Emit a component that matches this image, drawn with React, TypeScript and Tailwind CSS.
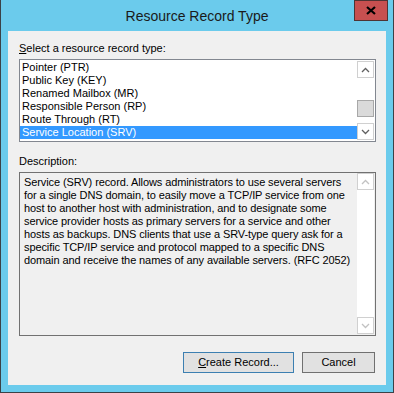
const items = [
  "Pointer (PTR)",
  "Public Key (KEY)",
  "Renamed Mailbox (MR)",
  "Responsible Person (RP)",
  "Route Through (RT)",
  "Service Location (SRV)",
];

const description = [
  "Service (SRV) record. Allows administrators to use several servers",
  "for a single DNS domain, to easily move a TCP/IP service from one",
  "host to another host with administration, and to designate some",
  "service provider hosts as primary servers for a service and other",
  "hosts as backups. DNS clients that use a SRV-type query ask for a",
  "specific TCP/IP service and protocol mapped to a specific DNS",
  "domain and receive the names of any available servers. (RFC 2052)",
];

const Chevron = ({ up, muted = false }: { up?: boolean; muted?: boolean }) => (
  <svg width="9" height="6" viewBox="0 0 9 6">
    <polyline
      points={up ? "1,5 4.5,1.5 8,5" : "1,1 4.5,4.5 8,1"}
      fill="none"
      stroke={muted ? "#c2c2c2" : "#606060"}
      strokeWidth="1.3"
    />
  </svg>
);

const ScrollButton = ({ up, muted }: { up?: boolean; muted?: boolean }) => (
  <div className="h-[17px] border border-[#d0d0d0] bg-white flex items-center justify-center">
    <Chevron up={up} muted={muted} />
  </div>
);

export default function App() {
  return (
    <div className="w-[394px] h-[393px] bg-[#6bcbec] border-x border-b border-[#3b4247] flex flex-col font-['Liberation_Sans',Arial,sans-serif] text-[11px] text-black">
      {/* title bar */}
      <div className="h-[31px] shrink-0 flex items-center justify-center relative">
        <span className="text-[14px] leading-[20px] text-[#1a1a1a]">Resource Record Type</span>
        <button className="absolute top-0 right-[5px] w-[34px] h-[21px] bg-[#c75050] border border-[#4f3434] flex items-center justify-center">
          <svg width="10" height="9" viewBox="0 0 10 9">
            <path d="M1 1 L9 8 M9 1 L1 8" stroke="#000" strokeWidth="2.2" />
          </svg>
        </button>
      </div>

      {/* client area */}
      <div className="mx-[7px] mb-[7px] flex-1 bg-[#f0f0f0] pl-[11px] pr-[10px] flex flex-col">
        <div className="mt-[11px] leading-[13px]">
          <span className="underline">S</span>elect a resource record type:
        </div>

        <div className="mt-[4px] h-[83px] border border-[#828790] bg-white flex">
          <div className="flex-1 pt-px">
            {items.map((item, i) => (
              <div
                key={item}
                className={`h-[13px] leading-[13px] pl-[2px] whitespace-nowrap ${
                  i === items.length - 1 ? "bg-[#3399ff] text-white" : ""
                }`}
              >
                {item}
              </div>
            ))}
          </div>
          <div className="w-[17px] my-px mr-px flex flex-col">
            <ScrollButton up />
            <div className="flex-1 pt-[22px]">
              <div className="h-[17px] bg-[#dadada] border border-[#a8a8a8]" />
            </div>
            <ScrollButton />
          </div>
        </div>

        <div className="mt-[13px] leading-[13px]">Description:</div>

        <div className="mt-[4px] h-[164px] border border-[#717171] flex">
          <div className="flex-1 pt-[3px] pl-[4px] leading-[13px] tracking-[-0.1px] whitespace-nowrap">
            {description.map((line) => (
              <div key={line}>{line}</div>
            ))}
          </div>
          <div className="w-[17px] mb-px mr-px flex flex-col bg-white">
            <ScrollButton up muted />
            <div className="flex-1" />
            <ScrollButton muted />
          </div>
        </div>

        <div className="mt-[16px] pr-px flex justify-end gap-[8px]">
          <button className="w-[111px] h-[21px] border border-[#3c7fb1] bg-[#e1e1e1] leading-[13px]">
            <span className="underline">C</span>reate Record...
          </button>
          <button className="w-[73px] h-[21px] border border-[#707070] bg-[#e1e1e1] leading-[13px]">
            Cancel
          </button>
        </div>
      </div>
    </div>
  );
}
